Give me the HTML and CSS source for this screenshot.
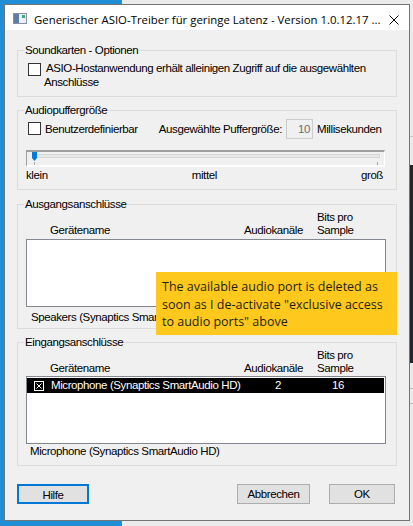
FILE: index.html
```html
<!DOCTYPE html>
<html lang="de">
<head>
<meta charset="utf-8">
<title>ASIO-Treiber</title>
<link rel="stylesheet" href="styles.css">
</head>
<body>
<div class="win">
  <div class="titlebar">
    <svg class="appicon" width="14" height="11" viewBox="0 0 14 11">
      <rect x="0.5" y="0.5" width="13" height="10" fill="#eef1f4" stroke="#8492a3"/>
      <rect x="1" y="1" width="5" height="9" fill="#5d7ea6"/>
      <rect x="9" y="2" width="3" height="3" fill="#3fa77a"/>
    </svg>
    <span class="title">Generischer ASIO-Treiber für geringe Latenz - Version 1.0.12.17 ...</span>
    <svg class="close" width="10" height="10" viewBox="0 0 10 10"><path d="M0.5 0.5L9.5 9.5M9.5 0.5L0.5 9.5" stroke="#000" stroke-width="1"/></svg>
  </div>
  <div class="client">
    <fieldset class="grp grp-sound">
      <legend>Soundkarten - Optionen</legend>
      <div class="chkrow">
        <span class="chk"></span>
        <span class="chklabel">ASIO-Hostanwendung erhält alleinigen Zugriff auf die ausgewählten<br>Anschlüsse</span>
      </div>
    </fieldset>
    <fieldset class="grp grp-buffer">
      <legend>Audiopuffergröße</legend>
      <div class="bufrow">
        <span class="chk chk-buf"></span>
        <span class="txt buflabel">Benutzerdefinierbar</span>
        <span class="txt sellabel">Ausgewählte Puffergröße:</span>
        <span class="numbox">10</span>
        <span class="txt unit">Millisekunden</span>
      </div>
      <div class="slider">
        <div class="track"></div>
        <svg class="thumb" width="5" height="9" viewBox="0 0 5 9"><polygon points="0,0 5,0 5,6 2.5,9 0,6" fill="#0078d7"/></svg>
        <span class="tick tick-min"></span>
        <span class="tick tick-max"></span>
      </div>
      <div class="scale"><span>klein</span><span>mittel</span><span>groß</span></div>
    </fieldset>
    <fieldset class="grp grp-out">
      <legend>Ausgangsanschlüsse</legend>
      <div class="colhead"><span>Gerätename</span><span>Audiokanäle</span><span>Bits pro<br>Sample</span></div>
      <div class="listbox"></div>
      <div class="devname">Speakers (Synaptics SmartAudio HD)</div>
    </fieldset>
    <fieldset class="grp grp-in">
      <legend>Eingangsanschlüsse</legend>
      <div class="colhead"><span>Gerätename</span><span>Audiokanäle</span><span>Bits pro<br>Sample</span></div>
      <div class="listbox">
        <div class="row">
          <svg class="rowchk" width="10" height="10" viewBox="0 0 10 10"><rect x="0.5" y="0.5" width="9" height="9" fill="none" stroke="#fff"/><path d="M2.5 2.5L7.5 7.5M7.5 2.5L2.5 7.5" stroke="#fff" stroke-width="1"/></svg>
          <span class="c-name">Microphone (Synaptics SmartAudio HD)</span>
          <span class="c-ch">2</span>
          <span class="c-bits">16</span>
        </div>
      </div>
      <div class="devname">Microphone (Synaptics SmartAudio HD)</div>
    </fieldset>
    <div class="buttons">
      <button class="btn btn-help">Hilfe</button>
      <button class="btn btn-cancel">Abbrechen</button>
      <button class="btn btn-ok">OK</button>
    </div>
  </div>
</div>
<div class="note">The available audio port is deleted as<br>soon as I de-activate "exclusive access<br>to audio ports" above</div>
</body>
</html>
```

FILE: styles.css
```css
html, body { margin: 0; padding: 0; }
body {
  width: 413px;
  height: 526px;
  overflow: hidden;
  position: relative;
  background:
    linear-gradient(#c8c8c8, #c8c8c8) right 0 top 136px / 3px 1px no-repeat,
    linear-gradient(#262626, #1d2733) right 0 top 165px / 3px 198px no-repeat,
    linear-gradient(#bdbdbd, #bdbdbd) right 0 top 388px / 3px 1px no-repeat,
    linear-gradient(#bdbdbd, #bdbdbd) right 0 top 403px / 3px 1px no-repeat,
    linear-gradient(to right, #1e8fd6 122px, #ebebeb 122px);
  font-family: "Liberation Sans", Arial, sans-serif;
  font-size: 11.5px;
  letter-spacing: -0.4px;
  color: #000;
}

.win {
  margin: 4px 0 0 4px;
  width: 404px;
  height: 515px;
  border: 1px solid #747474;
  background: #f0f0f0;
  display: flex;
  flex-direction: column;
}

.titlebar {
  height: 25px;
  box-sizing: border-box;
  padding-top: 5px;
  background: #fff;
  display: flex;
  align-items: center;
  flex: none;
}
.appicon { margin: 0 0 3px 8px; flex: none; }
.title {
  margin-left: 7px;
  font-family: "Open Sans", "Noto Sans", sans-serif;
  font-size: 11.4px;
  letter-spacing: 0;
  line-height: 16px;
  white-space: nowrap;
}
.close { margin-left: auto; margin-right: 10px; flex: none; }

.client {
  padding: 0 12px;
  display: flex;
  flex-direction: column;
}

.grp {
  margin: 0;
  padding: 0;
  border: 1px solid #dcdcdc;
  min-width: 0;
}
.grp legend {
  padding: 0 1px;
  margin-left: 6px;
  line-height: 14px;
}

.grp-sound { margin-top: 13px; padding-bottom: 7px; }
.chkrow { display: flex; align-items: flex-start; margin-top: 4px; }
.chk {
  width: 13px;
  height: 13px;
  box-sizing: border-box;
  border: 1px solid #333;
  background: #fff;
  flex: none;
}
.chkrow .chk { margin: 2px 0 0 10px; }
.chklabel { margin-left: 3px; line-height: 14px; text-indent: 2px; white-space: nowrap; }

.grp-buffer { margin-top: 6px; padding-bottom: 7px; }
.bufrow { display: flex; align-items: flex-start; height: 20px; margin-top: 2px; }
.chk-buf { margin: 3px 0 0 10px; }
.txt { line-height: 13px; margin-top: 4px; white-space: nowrap; }
.buflabel { margin-left: 4px; }
.sellabel { margin-left: auto; }
.numbox {
  margin-left: 4px;
  width: 27px;
  height: 20px;
  box-sizing: border-box;
  border: 1px solid #cccccc;
  color: #6d6d6d;
  text-align: right;
  padding-right: 2px;
  line-height: 18px;
  flex: none;
}
.unit { margin-left: 4px; width: 79px; flex: none; }

.slider {
  position: relative;
  margin: 11px 0 0 8px;
  width: 359px;
  height: 17px;
  box-sizing: border-box;
  border-top: 2px solid #a0a0a0;
  border-left: 1px solid #a0a0a0;
  border-right: 1px solid #fff;
  border-bottom: 2px solid #fff;
  background: #f0f0f0;
}
.track {
  position: absolute;
  left: 6px;
  top: 2px;
  width: 347px;
  height: 4px;
  box-sizing: border-box;
  border: 1px solid #d6d6d6;
  background: #e7e7e7;
}
.thumb { position: absolute; left: 5px; top: 0; }
.tick { position: absolute; top: 10px; width: 1px; height: 3px; background: #a8a8a8; }
.tick-min { left: 7px; }
.tick-max { left: 350px; }

.scale {
  margin: 2px 0 0 8px;
  width: 357px;
  display: flex;
  justify-content: space-between;
  line-height: 13px;
}

.colhead {
  display: grid;
  grid-template-columns: 194px 73px auto;
  align-items: end;
  padding-left: 32px;
  line-height: 13px;
  white-space: nowrap;
}
.listbox {
  margin-left: 8px;
  width: 360px;
  height: 68px;
  box-sizing: border-box;
  border: 1px solid #828790;
  background: #fff;
  padding: 1px 1px 0 0;
}
.devname { line-height: 13px; white-space: nowrap; }

.grp-out { margin-top: 7px; padding-bottom: 4px; }
.grp-out .listbox { margin-top: 2px; }
.grp-out .devname { margin-top: 4px; padding-left: 13px; }

.grp-in { margin-top: 6px; padding-bottom: 7px; }
.grp-in .listbox { margin-top: 1px; }
.grp-in .devname { margin-top: 1px; padding-left: 12px; }

.row {
  display: flex;
  align-items: center;
  height: 15px;
  line-height: 15px;
  background: #000;
  color: #fff;
  white-space: nowrap;
}
.rowchk { margin-left: 7px; flex: none; }
.c-name { margin-left: 7px; width: 224px; flex: none; }
.c-ch { width: 57px; flex: none; }

.buttons { display: flex; margin-top: 18px; }
.btn {
  height: 20px;
  box-sizing: border-box;
  margin: 0;
  padding: 0;
  background: #e1e1e1;
  border: 1px solid #adadad;
  font-family: "Liberation Sans", Arial, sans-serif;
  font-size: 11.5px;
  letter-spacing: -0.4px;
  color: #000;
  line-height: 18px;
  text-align: center;
}
.btn-help { width: 72px; border: 2px solid #0078d7; }
.btn-cancel { width: 73px; margin-left: auto; }
.btn-ok { width: 66px; margin-left: 19px; margin-right: 2px; }

.note {
  position: absolute;
  left: 156px;
  top: 272px;
  width: 241px;
  height: 63px;
  box-sizing: border-box;
  padding: 6px 0 0 6px;
  background: #fec81c;
  color: #1f1f1f;
  font-family: "Open Sans", "Noto Sans", sans-serif;
  font-size: 12.5px;
  line-height: 17.5px;
  letter-spacing: 0;
  white-space: nowrap;
}
```
